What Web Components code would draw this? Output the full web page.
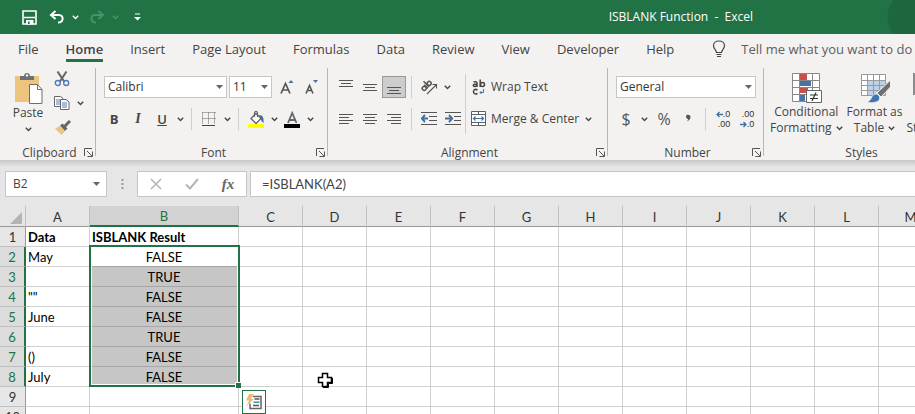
<!DOCTYPE html>
<html lang="en">
<head>
<meta charset="utf-8">
<title>ISBLANK Function - Excel</title>
<style>
  html, body {
    height: 100%;
  }
  body {
    margin: 0;
    display: flex;
    flex-direction: column;
    overflow: hidden;
    background: #fff;
    color: #444;
    font: 12px/16px "Open Sans", "Noto Sans", sans-serif;
  }
</style>
</head>
<body>
<title-bar heading="ISBLANK Function &nbsp;-&nbsp; Excel"></title-bar>
<ribbon-tabs></ribbon-tabs>
<excel-ribbon></excel-ribbon>
<formula-bar cell="B2" formula="=ISBLANK(A2)"></formula-bar>
<sheet-grid></sheet-grid>

<script>
/**
 * Icon drawings, each as [width, height, markup].
 */
const ICONS = {
  save: [15, 15, '<path d="M1 1h13v13H1z" fill="none" stroke="#fff" stroke-width="1.6"/><path d="M2 7.500h11" stroke="#fff" stroke-width="1.500"/><path d="M4 10h7.500v4.500H4z" fill="#fff"/><path d="M6 11.500h1.600v2.500H6z" fill="#217346"/>'],
  undo: [16, 14, '<path d="M6.500 1L2 5l4.500 4M2.500 5H10c5 0 5 7.500-1 7.500" fill="none" stroke="currentColor" stroke-width="2"/>'],
  redo: [16, 14, '<path d="M9.500 1L14 5 9.500 9M13.500 5H6c-5 0-5 7.500 1 7.500" fill="none" stroke="currentColor" stroke-width="2"/>'],
  more: [7, 8, '<path d="M1 1h5" stroke="#fff"/><path d="M0 4h7L3.500 7.500z" fill="#fff"/>'],
  bulb: [14, 18, '<path d="M4.500 12.500c0-2.500-3-3.500-3-6.700C1.500 2.800 4 1 7 1s5.500 1.800 5.500 4.800c0 3.200-3 4.200-3 6.700zM4.500 14.500h5M5 16.500h4" fill="none" stroke="#444" stroke-width="1.200"/>'],
  chevron: [7, 5, '<path d="M.8.8L3.500 3.500 6.200.8" fill="none" stroke="currentColor" stroke-width="1.400"/>'],
  launcher: [9, 9, '<path d="M.5 8V.5H8M3 3l5 5M8.500 3.500v5h-5" fill="none" stroke="#555"/>'],
  paste: [29, 32, '<path d="M1 3h24v26H1z" fill="#ecc47d"/><path d="M6 3h4c0-4 6-4 6 0h4v4H6z" fill="#6f6f6f"/><circle cx="13" cy="2.500" r="1.200" fill="#f3f2f1"/><path d="M15.500 11.500h8l4.500 5v14H15.500z" fill="#fff" stroke="#6f6f6f"/><path d="M23.500 11.500v5H28" fill="none" stroke="#6f6f6f"/>'],
  cut: [16, 16, '<path d="M3.500.5L10.500 11M12.500.5L5.500 11" stroke="#666" stroke-width="2"/><circle cx="3.800" cy="12" r="2.500" fill="none" stroke="#4f7eb8" stroke-width="1.400"/><circle cx="12.200" cy="12" r="2.500" fill="none" stroke="#4f7eb8" stroke-width="1.400"/>'],
  copy: [16, 14, '<path d="M.5.500h6l2.500 2v8H.5z" fill="#fff" stroke="#666"/><path d="M2 4h4M2 6h4M2 8h4" stroke="#4f7eb8"/><path d="M6.500 3.500h5.500l3 2.500v7.500H6.500z" fill="#fff" stroke="#666"/><path d="M8 7h5M8 9h5M8 11h5" stroke="#4f7eb8"/>'],
  painter: [17, 15, '<path d="M1 8.500L6 6l5 5-3.500 4z" fill="#ecc47d"/><path d="M6 5.500L8.500 3.500l5 5-2.500 2.500z" fill="#666"/><path d="M10.500 6.500L16 1" stroke="#666" stroke-width="3"/>'],
  border: [14, 14, '<path d="M.5.500h13M.5 6.500h13M.5.500v12M6.500.500v12M12.500.500v12" stroke="#666" stroke-dasharray="1 1"/><path d="M0 13.500h13" stroke="#444"/>'],
  fill: [17, 17, '<path d="M3 7.500L8 2.500l5 5-5 5z" fill="#fff" stroke="#666" stroke-width="1.300"/><path d="M6.500 6V2c0-2 3-2 3 0v4" fill="none" stroke="#666" stroke-width="1.200"/><path d="M11 4c4 0 5 3 4.500 8-2-1-2.500-4-4.500-8z" fill="#4669a0"/><path d="M0 13h16v4H0z" fill="#ff0"/>'],
  black: [16, 17, '<path d="M4 12L8.200 2l4.300 10M5.500 9h5.500" fill="none" stroke="#666" stroke-width="1.800"/><path d="M0 13h16v4H0z" fill="#000"/>'],
  grow: [14, 16, '<path d="M1 14.500L5.500 4.500l4.500 10M2.500 11h6" fill="none" stroke="#555" stroke-width="1.700"/><path d="M8.500 4L11 1l2.500 3z" fill="#4f6f9f"/>'],
  shrink: [14, 16, '<path d="M2 14.500L5.500 6.500 9 14.500M3.500 11.500h4" fill="none" stroke="#555" stroke-width="1.600"/><path d="M9 1h5L11.500 4z" fill="#4f6f9f"/>'],
  top: [14, 16, '<path d="M0 1.500h14M2 4.500h10M0 7.500h14" stroke="#555"/>'],
  middle: [14, 16, '<path d="M0 5.500h14M2 8.500h10M0 11.500h14" stroke="#555"/>'],
  bottom: [14, 16, '<path d="M0 8.500h14M2 11.500h10M0 14.500h14" stroke="#555"/>'],
  left: [14, 12, '<path d="M0 1.500h14M0 4.500h10M0 7.500h14M0 10.500h10" stroke="#555"/>'],
  center: [14, 12, '<path d="M0 1.500h14M2 4.500h10M0 7.500h14M2 10.500h10" stroke="#555"/>'],
  right: [14, 12, '<path d="M0 1.500h14M4 4.500h10M0 7.500h14M4 10.500h10" stroke="#555"/>'],
  orient: [17, 16, '<g fill="none" stroke="#555" stroke-width="1.500"><g transform="rotate(-45 5 9)"><circle cx="3.500" cy="8" r="2"/><path d="M6 5.500v5M8 2.500v8"/><circle cx="10.500" cy="8" r="2"/></g><path d="M6 15L15.500 5.500M11.500 5.500h4v4" stroke-width="1.100"/></g>'],
  outdent: [16, 14, '<path d="M0 .5h16M8 4.500h8M8 8.500h8M0 12.500h16" stroke="#555"/><path d="M7 6.500H1M4 3L.8 6.500 4 10" fill="none" stroke="#41719c" stroke-width="1.900"/>'],
  indent: [16, 14, '<path d="M0 .5h16M9 4.500h7M9 8.500h7M0 12.500h16" stroke="#555"/><path d="M0 6.500h6M4 3l3.200 3.500L4 10" fill="none" stroke="#41719c" stroke-width="1.900"/>'],
  wrap: [16, 16, '<g transform="translate(1 0)"><g fill="none" stroke="#444" stroke-width="1.500"><path d="M1.500 3.200C3 2.300 5 2.500 5 4v4M5 5C0 4.800.8 8 3 7.400 4.200 7.200 5 6.500 5 5.500"/><path d="M8.200.5v7.500"/><circle cx="10.500" cy="5.500" r="2"/><path d="M5.500 11C3 9.500 1.500 11 1.500 12.700s1.500 3 4 1.800"/></g><path d="M11.500 10v3.500H8M9.500 12L8 13.500 9.500 15" fill="none" stroke="#41719c"/></g>'],
  merge: [16, 16, '<path d="M.5.500h14v14H.5zM.5 3.500h14M.5 11.500h14M7.500.500v3M7.500 11.500v3" fill="#fff" stroke="#55606b"/><path d="M2.500 7.500h10M4.500 5.500l-2 2 2 2M10.500 5.500l2 2-2 2" fill="none" stroke="#41719c" stroke-width="1.200"/>'],
  comma: [6, 12, '<path d="M1 3.500C1 1 5.500 1 5.500 4c0 2-1.500 3.500-4 4.500 1-1 1.700-1.700 1.700-2.600C1.800 5.900 1 5 1 3.500z" fill="#555"/>'],
  arrowLeft: [7, 7, '<path d="M7 3.500H1M3.500 1L1 3.500 3.500 6" fill="none" stroke="#41719c" stroke-width="1.300"/>'],
  arrowRight: [7, 7, '<path d="M0 3.500h6M3.500 1L6 3.500 3.500 6" fill="none" stroke="#41719c" stroke-width="1.300"/>'],
  cond: [32, 32, '<path d="M2.500 1.500h27v28h-27z" fill="#fff"/><path d="M10 2h7v6h-7zM10 15h8v6h-8z" fill="#c8504a"/><path d="M10 8h11v6H10zM10 22h5v7h-5z" fill="#4674a8"/><path d="M2.500 1.500h27v28h-27zM2.500 8.500h27M2.500 15.500h27M2.500 22.500h27M9.500 1.500v28M22.500 1.500v28" fill="none" stroke="#888"/><path d="M16.500 18.500h15v12h-15z" fill="#fff" stroke="#666"/><path d="M20 23h8M20 26.500h8M26 20.500l-4 8.500" stroke="#333" stroke-width="1.200"/>'],
  table: [32, 32, '<path d="M2.500 2.500h24v21h-24z" fill="#fff"/><path d="M9 9h17v14H9z" fill="#bdd2e8"/><path d="M2.500 2.500h24v21h-24zM2.500 8.500h24M2.500 13.500h24M2.500 18.500h24M8.500 2.500v21M14.500 2.500v21M20.500 2.500v21" fill="none" stroke="#999"/><path d="M31.500 8v7L22 25l-4-4z" fill="#6f6f6f" stroke="#f3f2f1"/><path d="M8 30c5-1 4-8 9-8 5 1 5 7 0 8-3 1-6 1-9 0z" fill="#3c76b5" stroke="#f3f2f1" stroke-width=".8"/>'],
  styles: [32, 32, '<path d="M1 1h30v22H1z" fill="#8a8a8a"/><path d="M4 9h24v11H4z" fill="#fff"/>'],
  cancel: [12, 12, '<path d="M1 1l10 10M11 1L1 11" stroke="#b5b5b5" stroke-width="1.500"/>'],
  enter: [14, 12, '<path d="M1 6.500l4 4L13 1" fill="none" stroke="#b5b5b5" stroke-width="2"/>'],
  dots: [3, 12, '<path d="M.5 1h2v2h-2zM.5 5h2v2h-2zM.5 9h2v2h-2z" fill="#999"/>'],
  down: [7, 4, '<path d="M0 0h7L3.500 4z" fill="#666"/>'],
  corner: [12, 12, '<path d="M12 0v12H0z" fill="#b4b4b4"/>'],
  quick: [18, 18, '<path d="M8 3.500h8v12H5v-5" fill="#fff" stroke="#666" stroke-width="1.500"/><path d="M9.500 6h5M8 12.500h6" stroke="#555" stroke-width="1.500"/><path d="M8.500 9.200h6" stroke="#3a9aa0" stroke-width="1.500"/><path d="M4 1h5L6 6h3L1.500 13 4 7.500H1z" fill="#eebb77"/>'],
  cross: [16, 16, '<path d="M5.500 1.500h5v4h4v5h-4v4h-5v-4h-4v-5h4z" fill="#fff" stroke="#000" stroke-width="1.500"/><path d="M6 15.500h5.500V11.500h4V6" fill="none" stroke="#000"/>']
}

/**
 * Attach an open shadow root with the given markup.
 */
function render (element, html) {
  const template = document.createElement('template')
  template.innerHTML = html
  element.attachShadow({ mode: 'open' }).appendChild(template.content.cloneNode(true))
}

const icon = name => `<x-icon name="${name}"></x-icon>`
const chevron = label => `<tool-button narrow label="${label}">${icon('chevron')}</tool-button>`
const tool = (label, content) => `<tool-button label="${label}">${content}</tool-button>`

customElements.define('x-icon',
  class extends HTMLElement {
    connectedCallback () {
      const [width, height, markup] = ICONS[this.getAttribute('name')]
      render(this, `
        <style>
          :host { display: inline-flex; flex: none; }
          svg { display: block; }
        </style>
        <svg width="${width}" height="${height}" viewBox="0 0 ${width} ${height}" aria-hidden="true">${markup}</svg>`)
    }
  }
)

customElements.define('tool-button',
  /**
   * A flat button. With "large" its icon stands over its text.
   */
  class extends HTMLElement {
    connectedCallback () {
      render(this, `
        <style>
          :host { display: inline-flex; flex: none; }
          button {
            display: flex; align-items: center; justify-content: center;
            box-sizing: border-box; width: 24px; height: 22px; padding: 0;
            border: 1px solid transparent; background: none;
            color: inherit; font: inherit; white-space: nowrap;
          }
          button:hover { background: #e1dfdd; }
          :host([narrow]) button { width: 12px; }
          :host([pressed]) button { background: #cdcdcd; border-color: #999; }
          :host([wide]) button { width: auto; gap: 4px; }
          :host([large]) button { flex-direction: column; width: auto; height: auto; border: 0; }
        </style>
        <button type="button"><slot></slot></button>`)
      const label = this.getAttribute('label')
      if (label) {
        this.shadowRoot.querySelector('button').setAttribute('aria-label', label)
      }
    }
  }
)

customElements.define('combo-box',
  class extends HTMLElement {
    connectedCallback () {
      render(this, `
        <style>
          :host { display: inline-grid; flex: none; align-items: center; }
          select, x-icon { grid-area: 1 / 1; }
          select {
            appearance: none; box-sizing: border-box; width: 100%; height: 22px;
            margin: 0; padding: 0 3px; border: 1px solid #c6c6c6; border-radius: 0;
            background: #fff; color: #333; font: inherit;
          }
          x-icon { justify-self: end; margin-right: 4px; pointer-events: none; }
        </style>
        <select aria-label="${this.getAttribute('label')}"><option>${this.getAttribute('value')}</option></select>
        ${icon('down')}`)
    }
  }
)

customElements.define('title-bar',
  class extends HTMLElement {
    connectedCallback () {
      render(this, `
        <style>
          :host {
            display: flex; flex: none; align-items: center; height: 34px;
            padding-left: 17px; overflow: hidden; color: #fff;
            background: radial-gradient(circle at 100% 50%, #1e663e 27px, transparent 28px), #217346;
          }
          .off { color: #4c9169; display: flex; }
          .gap { width: 4px; }
          h1 { margin: 0 162px 0 auto; font: inherit; white-space: nowrap; }
        </style>
        ${tool('Save', icon('save'))}
        <span class="gap"></span>
        ${tool('Undo', icon('undo'))}${chevron('Undo list')}
        <span class="gap"></span>
        <span class="off">${tool('Redo', icon('redo'))}${chevron('Redo list')}</span>
        <span class="gap"></span>
        ${tool('Customize Quick Access Toolbar', icon('more'))}
        <h1>${this.getAttribute('heading')}</h1>`)
    }
  }
)

customElements.define('ribbon-tabs',
  class extends HTMLElement {
    connectedCallback () {
      const tabs = ['File', 'Home', 'Insert', 'Page Layout', 'Formulas', 'Data', 'Review', 'View', 'Developer', 'Help']
      render(this, `
        <style>
          :host {
            display: flex; flex: none; align-items: center; box-sizing: border-box;
            height: 34px; padding: 0 0 4px 18px; overflow: hidden; background: #f3f2f1;
            font-size: 13px; white-space: nowrap;
          }
          nav { display: flex; gap: 27px; }
          a { color: inherit; text-decoration: none; padding-top: 3px; border-bottom: 3px solid transparent; line-height: 20px; }
          a.active { border-color: #217346; font-weight: 600; }
          button {
            display: flex; align-items: center; gap: 15px; margin-left: 38px; padding: 0;
            border: 0; background: none; color: #605e5c; font: inherit; white-space: nowrap;
          }
        </style>
        <nav>${tabs.map(tab => `<a href="#"${tab === 'Home' ? ' class="active"' : ''}>${tab}</a>`).join('')}</nav>
        <button type="button">${icon('bulb')}<span>Tell me what you want to do</span></button>`)
    }
  }
)

customElements.define('ribbon-group',
  /**
   * A captioned section of the ribbon, with a rule on its right.
   */
  class extends HTMLElement {
    connectedCallback () {
      const caption = this.getAttribute('caption')
      const launcher = this.hasAttribute('launcher')
        ? `<button type="button" aria-label="${caption} settings">${icon('launcher')}</button>`
        : ''
      render(this, `
        <style>
          :host {
            display: flex; flex: none; flex-direction: column; justify-content: space-between;
            box-sizing: border-box; height: 92px; padding: 0 3px 0 6px;
            background: linear-gradient(#b8b8b8, #b8b8b8) right top / 1px 88px no-repeat;
          }
          .tools { display: flex; }
          footer { display: grid; grid-template-columns: 12px 1fr 12px; align-items: center; }
          footer span { grid-column: 2; text-align: center; line-height: 15px; }
          button { display: flex; padding: 0; justify-self: end; border: 0; background: none; }
        </style>
        <div class="tools"><slot></slot></div>
        <footer><span>${caption}</span>${launcher}</footer>`)
    }
  }
)

customElements.define('excel-ribbon',
  class extends HTMLElement {
    connectedCallback () {
      render(this, `
        <style>
          :host { display: flex; flex: none; overflow: hidden; background: #f3f2f1; }
          ribbon-group { min-width: var(--w); }
          .rows { display: flex; flex-direction: column; gap: 10px; padding-top: 8px; }
          .rows.tight { gap: 2px; padding-top: 0; }
          .row { display: flex; align-items: center; height: 22px; }
          .sep { width: 1px; height: 22px; margin: 0 5px; background: #d0cecc; }
          .sep.tall { height: 60px; margin: 6px 4px 0 0; }
          .gap { width: 2px; }
          combo-box { margin-left: 2px; }
          .font { width: 123px; }
          .size { width: 43px; margin-right: 3px; }
          .number { width: 140px; }
          .large { display: flex; gap: 4px; padding-top: 4px; }
          .paste { width: 44px; justify-content: center; }
          .line { display: flex; align-items: center; gap: 4px; height: 16px; }
          .glyph { font-size: 16px; color: #555; }
          .bold { font-weight: 700; font-size: 13px; }
          .italic { font: italic 700 14px "Liberation Serif", serif; }
          .underline { font-weight: 600; font-size: 13px; text-decoration: underline; }
          .decimals { display: flex; flex-direction: column; align-items: flex-end; font: 9px/10px "Liberation Sans", sans-serif; color: #333; }
          .decimals span { display: flex; align-items: center; height: 10px; }
        </style>
        <ribbon-group caption="Clipboard" launcher style="--w: 96px">
          <div class="large">
            <tool-button large class="paste">${icon('paste')}<span class="line">Paste</span><span class="line">${icon('chevron')}</span></tool-button>
          </div>
          <div class="rows tight">
            <div class="row">${tool('Cut', icon('cut'))}</div>
            <div class="row">${tool('Copy', icon('copy'))}${chevron('Copy options')}</div>
            <div class="row">${tool('Format Painter', icon('painter'))}</div>
          </div>
        </ribbon-group>
        <ribbon-group caption="Font" launcher style="--w: 232px">
          <div class="rows">
            <div class="row">
              <combo-box class="font" label="Font" value="Calibri"></combo-box>
              <combo-box class="size" label="Font size" value="11"></combo-box>
              ${tool('Increase font size', icon('grow'))}${tool('Decrease font size', icon('shrink'))}
            </div>
            <div class="row">
              ${tool('Bold', '<span class="bold">B</span>')}${tool('Italic', '<span class="italic">I</span>')}${tool('Underline', '<span class="underline">U</span>')}${chevron('Underline options')}
              <span class="sep"></span>
              ${tool('Borders', icon('border'))}${chevron('Border options')}
              <span class="sep"></span>
              ${tool('Fill color', icon('fill'))}${chevron('Fill colors')}
              ${tool('Font color', icon('black'))}${chevron('Font colors')}
            </div>
          </div>
        </ribbon-group>
        <ribbon-group caption="Alignment" launcher style="--w: 280px">
          <div class="rows">
            <div class="row">
              ${tool('Top align', icon('top'))}${tool('Middle align', icon('middle'))}<tool-button pressed label="Bottom align">${icon('bottom')}</tool-button>
              <span class="sep"></span>
              ${tool('Orientation', icon('orient'))}${chevron('Orientation options')}
            </div>
            <div class="row">
              ${tool('Align left', icon('left'))}${tool('Center', icon('center'))}${tool('Align right', icon('right'))}
              <span class="sep"></span>
              ${tool('Decrease indent', icon('outdent'))}${tool('Increase indent', icon('indent'))}
            </div>
          </div>
          <span class="sep tall"></span>
          <div class="rows">
            <div class="row"><tool-button wide>${icon('wrap')}<span>Wrap Text</span></tool-button></div>
            <div class="row"><tool-button wide>${icon('merge')}<span>Merge &amp; Center</span></tool-button><span class="gap"></span>${chevron('Merge options')}</div>
          </div>
        </ribbon-group>
        <ribbon-group caption="Number" launcher style="--w: 156px">
          <div class="rows">
            <div class="row"><combo-box class="number" label="Number format" value="General"></combo-box></div>
            <div class="row">
              ${tool('Accounting format', '<span class="glyph">$</span>')}${chevron('Accounting formats')}<span class="gap"></span>
              ${tool('Percent style', '<span class="glyph">%</span>')}${tool('Comma style', icon('comma'))}
              <span class="sep"></span>
              ${tool('Increase decimal', `<span class="decimals"><span>${icon('arrowLeft')}.0</span><span>.00</span></span>`)}
              ${tool('Decrease decimal', `<span class="decimals"><span>.00</span><span>${icon('arrowRight')}.0</span></span>`)}
            </div>
          </div>
        </ribbon-group>
        <ribbon-group caption="Styles" style="--w: 192px">
          <div class="large">
            <tool-button large>${icon('cond')}<span class="line">Conditional</span><span class="line">Formatting ${icon('chevron')}</span></tool-button>
            <tool-button large>${icon('table')}<span class="line">Format as</span><span class="line">Table ${icon('chevron')}</span></tool-button>
            <tool-button large>${icon('styles')}<span class="line">Cell</span><span class="line">Styles ${icon('chevron')}</span></tool-button>
          </div>
        </ribbon-group>`)
    }
  }
)

customElements.define('formula-bar',
  class extends HTMLElement {
    connectedCallback () {
      render(this, `
        <style>
          :host {
            display: flex; flex: none; align-items: center; padding: 11px 0 9px 5px;
            background: linear-gradient(#c8c8c8, #e6e6e6 7px);
          }
          .box {
            display: flex; align-items: center; box-sizing: border-box; height: 26px;
            border: 1px solid #c6c6c6; background: #fff;
          }
          .name { width: 102px; padding-right: 6px; }
          .actions { width: 110px; justify-content: space-around; margin-right: 3px; }
          .formula { flex: 1; border-right: 0; }
          .dots { width: 30px; display: flex; justify-content: center; }
          input { flex: 1; min-width: 0; border: 0; padding: 0 7px; background: none; color: #444; font: inherit; }
          .formula input { padding-left: 11px; font: 13px Lato, sans-serif; }
          em { font: italic 700 15px "Liberation Serif", serif; color: #666; }
        </style>
        <div class="box name"><input aria-label="Name box" value="${this.getAttribute('cell')}">${icon('down')}</div>
        <span class="dots">${icon('dots')}</span>
        <div class="box actions">
          ${tool('Cancel', icon('cancel'))}${tool('Enter', icon('enter'))}${tool('Insert function', '<em>fx</em>')}
        </div>
        <div class="box formula"><input aria-label="Formula" value="${this.getAttribute('formula')}"></div>`)
    }
  }
)

customElements.define('sheet-grid',
  /**
   * The worksheet cells, with B2:B8 selected.
   */
  class extends HTMLElement {
    connectedCallback () {
      const columns = [...'ABCDEFGHIJKLM']
      const data = [
        ['Data', 'ISBLANK Result'],
        ['May', 'FALSE'],
        ['', 'TRUE'],
        ['""', 'FALSE'],
        ['June', 'FALSE'],
        ['', 'TRUE'],
        ['()', 'FALSE'],
        ['July', 'FALSE'],
        [],
        []
      ]
      const cell = (row, column) => {
        const selected = column === 1 && row >= 1 && row <= 7
        const range = column === 1 && row === 1
          ? `<div class="range"></div><button class="quick" type="button" aria-label="Quick analysis">${icon('quick')}</button>`
          : ''
        return `<td class="${selected ? 'selected' : ''}">${data[row][column] ?? ''}${range}</td>`
      }
      const rows = data.map((_, row) => `
        <tr><th scope="row" class="${row >= 1 && row <= 7 ? 'active' : ''}">${row + 1}</th>${columns.map((_, column) => cell(row, column)).join('')}</tr>`)

      render(this, `
        <style>
          :host { display: block; flex: 1; min-height: 0; position: relative; overflow: hidden; font: 13px/17px Lato, sans-serif; color: #000; }
          table { table-layout: fixed; width: 943px; border-spacing: 0; }
          th, td { box-sizing: border-box; height: 20px; padding: 2px 0 0; border: solid #d0d0d0; border-width: 0 1px 1px 0; white-space: nowrap; }
          td { padding: 2px 2px 0; }
          th { background: #e6e6e6; color: #333; font-weight: 400; border-color: #c0c0c0; }
          thead th { height: 21px; border-bottom-color: #999; }
          tbody th { border-right-color: #999; }
          thead .active { background: #d2d2d2; color: #217346; border-bottom: 2px solid #217346; }
          tbody .active { background: #dcdcdc; color: #217346; border-right: 2px solid #217346; }
          .corner { text-align: right; padding: 4px 3px 0 0; line-height: 12px; }
          .index { width: 26px; }
          .first { width: 64px; }
          .wide { width: 149px; }
          tbody tr:first-child td { font-weight: 700; }
          .selected { position: relative; text-align: center; background: #c6c6c6; border-bottom-color: #a6a6a6; }
          tr:nth-child(2) .selected { background: #fff; z-index: 1; }
          .range {
            position: absolute; top: -2px; left: -1px; right: -2px; height: 138px;
            border: 2px solid #217346; box-shadow: inset 0 0 0 1px #fff; pointer-events: none;
          }
          .range::after {
            content: ""; position: absolute; right: -3px; bottom: -3px; width: 5px; height: 5px;
            background: #217346; border: 1px solid #fff; border-width: 1px 0 0 1px;
          }
          .quick {
            position: absolute; top: 143px; left: 100%; margin-left: 4px; box-sizing: border-box; width: 24px; height: 24px;
            padding: 2px; border: 1px solid #217346; background: #fff; display: flex;
          }
          .cursor { position: absolute; left: 317px; top: 166px; }
        </style>
        <table>
          <colgroup><col class="index"><col class="first"><col class="wide">${'<col>'.repeat(11)}</colgroup>
          <thead><tr><th class="corner">${icon('corner')}</th>${columns.map(name => `<th scope="col" class="${name === 'B' ? 'active' : ''}">${name}</th>`).join('')}</tr></thead>
          <tbody>${rows.join('')}</tbody>
        </table>
        <x-icon class="cursor" name="cross"></x-icon>`)
    }
  }
)
</script>
</body>
</html>
